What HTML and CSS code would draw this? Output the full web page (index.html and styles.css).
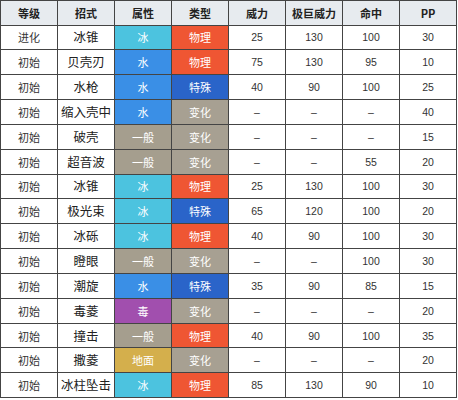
FILE: index.html
```html
<!DOCTYPE html>
<html lang="zh">
<head>
<meta charset="utf-8">
<link rel="stylesheet" href="styles.css">
</head>
<body>
<table class="moves">
  <thead>
    <tr><th>等级</th><th>招式</th><th>属性</th><th>类型</th><th>威力</th><th>极巨威力</th><th>命中</th><th>PP</th></tr>
  </thead>
  <tbody>
    <tr><td>进化</td><td class="name">冰锥</td><td class="t ice">冰</td><td class="t phy">物理</td><td class="n">25</td><td class="n">130</td><td class="n">100</td><td class="n">30</td></tr>
    <tr><td>初始</td><td class="name">贝壳刃</td><td class="t water">水</td><td class="t phy">物理</td><td class="n">75</td><td class="n">130</td><td class="n">95</td><td class="n">10</td></tr>
    <tr><td>初始</td><td class="name">水枪</td><td class="t water">水</td><td class="t spe">特殊</td><td class="n">40</td><td class="n">90</td><td class="n">100</td><td class="n">25</td></tr>
    <tr><td>初始</td><td class="name">缩入壳中</td><td class="t water">水</td><td class="t sta">变化</td><td class="n">–</td><td class="n">–</td><td class="n">–</td><td class="n">40</td></tr>
    <tr><td>初始</td><td class="name">破壳</td><td class="t normal">一般</td><td class="t sta">变化</td><td class="n">–</td><td class="n">–</td><td class="n">–</td><td class="n">15</td></tr>
    <tr><td>初始</td><td class="name">超音波</td><td class="t normal">一般</td><td class="t sta">变化</td><td class="n">–</td><td class="n">–</td><td class="n">55</td><td class="n">20</td></tr>
    <tr><td>初始</td><td class="name">冰锥</td><td class="t ice">冰</td><td class="t phy">物理</td><td class="n">25</td><td class="n">130</td><td class="n">100</td><td class="n">30</td></tr>
    <tr><td>初始</td><td class="name">极光束</td><td class="t ice">冰</td><td class="t spe">特殊</td><td class="n">65</td><td class="n">120</td><td class="n">100</td><td class="n">20</td></tr>
    <tr><td>初始</td><td class="name">冰砾</td><td class="t ice">冰</td><td class="t phy">物理</td><td class="n">40</td><td class="n">90</td><td class="n">100</td><td class="n">30</td></tr>
    <tr><td>初始</td><td class="name">瞪眼</td><td class="t normal">一般</td><td class="t sta">变化</td><td class="n">–</td><td class="n">–</td><td class="n">100</td><td class="n">30</td></tr>
    <tr><td>初始</td><td class="name">潮旋</td><td class="t water">水</td><td class="t spe">特殊</td><td class="n">35</td><td class="n">90</td><td class="n">85</td><td class="n">15</td></tr>
    <tr><td>初始</td><td class="name">毒菱</td><td class="t poison">毒</td><td class="t sta">变化</td><td class="n">–</td><td class="n">–</td><td class="n">–</td><td class="n">20</td></tr>
    <tr><td>初始</td><td class="name">撞击</td><td class="t normal">一般</td><td class="t phy">物理</td><td class="n">40</td><td class="n">90</td><td class="n">100</td><td class="n">35</td></tr>
    <tr><td>初始</td><td class="name">撒菱</td><td class="t ground">地面</td><td class="t sta">变化</td><td class="n">–</td><td class="n">–</td><td class="n">–</td><td class="n">20</td></tr>
    <tr><td>初始</td><td class="name">冰柱坠击</td><td class="t ice">冰</td><td class="t phy">物理</td><td class="n">85</td><td class="n">130</td><td class="n">90</td><td class="n">10</td></tr>
  </tbody>
</table>
</body>
</html>
```

FILE: styles.css
```css
html, body {
  margin: 0;
  padding: 0;
  background: #ffffff;
}
body {
  font-family: "Noto Sans CJK SC", "DejaVu Sans", sans-serif;
  color: #333333;
}
.moves {
  border-collapse: collapse;
  table-layout: fixed;
  width: 456px;
}
.moves th,
.moves td {
  border: 1px solid #444444;
  width: 56px;
  height: 23.85px;
  padding: 0;
  text-align: center;
  vertical-align: middle;
  font-size: 11px;
  line-height: 14px;
  overflow: hidden;
  white-space: nowrap;
}
.moves th {
  background: #e7ebef;
  font-weight: bold;
  color: #222222;
  height: 23.5px;
}
.moves td.name {
  font-size: 12.5px;
  color: #222222;
}
.moves td.n {
  font-family: "Liberation Sans", sans-serif;
  font-size: 10.5px;
}
.moves td.t {
  color: #ffffff;
  font-size: 11px;
}
.ice { background: #4cc3df; }
.water { background: #3a8fe6; }
.normal { background: #a59e8e; }
.poison { background: #a14fae; }
.ground { background: #d4af4c; }
.phy { background: #ef5633; }
.spe { background: #2a64c9; }
.sta { background: #a7a092; }
```
